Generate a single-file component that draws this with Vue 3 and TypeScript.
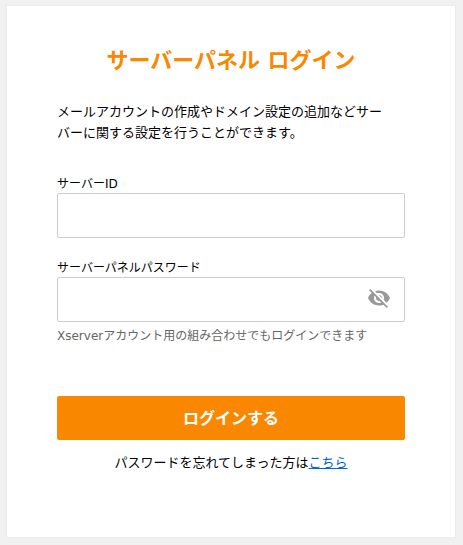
<script setup lang="ts">
import { ref } from 'vue'

const serverId = ref<string>('')
const password = ref<string>('')
const visible = ref<boolean>(false)
</script>

<template>
  <main class="card">
    <h1 class="title">サーバーパネル ログイン</h1>
    <p class="lead">メールアカウントの作成やドメイン設定の追加などサーバーに関する設定を行うことができます。</p>
    <form @submit.prevent>
      <div class="field">
        <label class="label" for="server-id">サーバーID</label>
        <input id="server-id" v-model="serverId" class="input" type="text" autocomplete="username" />
      </div>
      <div class="field">
        <label class="label" for="server-password">サーバーパネルパスワード</label>
        <div class="password">
          <input
            id="server-password"
            v-model="password"
            class="input"
            :type="visible ? 'text' : 'password'"
            autocomplete="current-password"
          />
          <button class="toggle" type="button" aria-label="パスワードを表示" :aria-pressed="visible" @click="visible = !visible">
            <svg viewBox="0 0 24 24" width="24" height="24" aria-hidden="true">
              <path
                fill="currentColor"
                d="M12 7c2.76 0 5 2.24 5 5 0 .65-.13 1.26-.36 1.83l2.92 2.92c1.51-1.26 2.7-2.89 3.43-4.75-1.73-4.39-6-7.5-11-7.5-1.4 0-2.74.25-3.98.7l2.16 2.16C10.74 7.13 11.35 7 12 7zM2 4.27l2.28 2.28.46.46C3.08 8.3 1.78 10.02 1 12c1.73 4.39 6 7.5 11 7.5 1.55 0 3.03-.3 4.38-.84l.42.42L19.73 22 21 20.73 3.27 3 2 4.27zM7.53 9.8l1.55 1.55c-.05.21-.08.43-.08.65 0 1.66 1.34 3 3 3 .22 0 .44-.03.65-.08l1.55 1.55c-.67.33-1.41.53-2.2.53-2.76 0-5-2.24-5-5 0-.79.2-1.53.53-2.2zm4.31-.78l3.15 3.15.02-.16c0-1.66-1.34-3-3-3l-.17.01z"
              />
            </svg>
          </button>
        </div>
        <p class="hint">Xserverアカウント用の組み合わせでもログインできます</p>
      </div>
      <button class="submit" type="submit">ログインする</button>
    </form>
    <p class="forgot">パスワードを忘れてしまった方は<a href="#">こちら</a></p>
  </main>
</template>

<style>
body {
  margin: 0;
  background: #f1f1f1;
}
</style>

<style scoped>
.card {
  box-sizing: border-box;
  max-width: 640px;
  margin: 5px 7px 7px 6px;
  padding: 39px 50px 64px;
  border: 1px solid #ececec;
  background: #fff;
  color: #000;
  font-family: Meiryo, "DejaVu Sans", "Noto Sans CJK JP", sans-serif;
  font-size: 13px;
  line-height: 21px;
}

.title {
  margin: 0 0 24px;
  color: #fa8700;
  font-size: 22px;
  line-height: 32px;
  font-weight: 700;
  text-align: center;
}

.lead {
  margin: 0 0 32px;
  padding-right: 16px;
}

.field {
  margin-bottom: 20px;
}

.label {
  display: block;
  font-size: 12px;
  line-height: 18px;
}

.input {
  display: block;
  box-sizing: border-box;
  width: 100%;
  height: 45px;
  padding: 0 12px;
  border: 1px solid #ccc;
  border-radius: 2px;
  background: #fff;
  font: inherit;
}

.field + .field {
  margin-top: 21px;
}

.password {
  position: relative;
}

.password .input {
  padding-right: 48px;
}

.toggle {
  position: absolute;
  top: 9px;
  right: 14px;
  padding: 0;
  border: 0;
  background: none;
  color: #999;
  cursor: pointer;
}

.toggle svg {
  display: block;
}

.hint {
  margin: 4px 0 0;
  color: #666;
  font-size: 12px;
  line-height: 20px;
}

.submit {
  display: block;
  width: 100%;
  height: 44px;
  margin-top: 50px;
  padding: 0;
  border: 0;
  border-radius: 2px;
  background: #fa8700;
  color: #fff;
  font: inherit;
  font-size: 16px;
  font-weight: 700;
  cursor: pointer;
}

.forgot {
  margin: 12px 0 0;
  text-align: center;
}

.forgot a {
  color: #0066cc;
}
</style>
